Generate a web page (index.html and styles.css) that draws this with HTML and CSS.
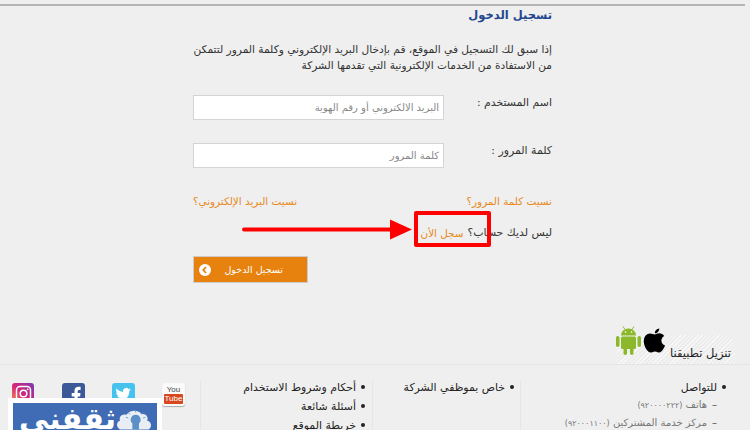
FILE: index.html
```html
<!DOCTYPE html>
<html lang="ar" dir="rtl">
<head>
<meta charset="utf-8">
<title>تسجيل الدخول</title>
<link rel="stylesheet" href="styles.css">
</head>
<body>
<main class="main">
  <div class="topline"></div>
  <section class="panel">
    <h1 class="title">تسجيل الدخول</h1>
    <p class="intro">إذا سبق لك التسجيل في الموقع، قم بإدخال البريد الإلكتروني وكلمة المرور لتتمكن<br>من الاستفادة من الخدمات الإلكترونية التي تقدمها الشركة</p>
    <div class="field field-user">
      <label class="label">اسم المستخدم :</label>
      <div class="input">البريد الالكتروني أو رقم الهوية</div>
    </div>
    <div class="field field-pass">
      <label class="label">كلمة المرور :</label>
      <div class="input">كلمة المرور</div>
    </div>
    <div class="forgot">
      <a class="link">نسيت كلمة المرور؟</a>
      <a class="link">نسيت البريد الإلكتروني؟</a>
    </div>
    <div class="signup">
      <span>ليس لديك حساب؟</span>
      <a class="link signup-link">سجل الأن</a>
      <span class="redbox"></span>
      <svg class="arrow" width="175" height="30" viewBox="0 0 175 30"><path d="M2 14.500H150" stroke="#f00" stroke-width="4" stroke-linecap="round"/><path d="M148 4.500L170 14.500L148 24.500Z" fill="#f00"/></svg>
    </div>
    <div class="btn">
      <span>تسجيل الدخول</span>
      <svg class="btn-ico" width="12" height="12" viewBox="0 0 12 12"><circle cx="6" cy="6" r="6" fill="#fff"/><path d="M7 3L4.300 6L7 9" fill="none" stroke="#e8820f" stroke-width="1.800"/></svg>
    </div>
  </section>
  <div class="apps">
    <div class="apps-tab">
      <span class="apps-text">تنزيل تطبيقنا</span>
      <svg class="apple" width="23" height="27" viewBox="0 0 24 27"><path d="M17 1c.2 2.500-2 5-4.600 5C12.100 3.500 14.500 1.200 17 1zM12.300 7.200c1.200 0 2.600-1.200 4.800-1.200 1.800 0 3.800 1 5 2.800-4.300 2.400-3.600 8.400.9 10-1.300 3.300-3.700 7.200-6 7.200-1.800 0-2.400-1.100-4.500-1.100s-2.800 1.100-4.500 1.100C4.800 26 .8 19.500.8 14.300.8 9.300 4 6.200 7.300 6.200c2.100 0 3.800 1 5 1z" fill="#000"/></svg>
      <svg class="android" width="25" height="29" viewBox="0 0 25 29"><g fill="#8cb92b"><path d="M5 9.500a7.500 7 0 0 1 15 0z"/><rect x="5" y="10.500" width="15" height="12.500" rx="1.500"/><rect x="0" y="10" width="3.500" height="11" rx="1.700"/><rect x="21.500" y="10" width="3.500" height="11" rx="1.700"/><rect x="7.500" y="20" width="3.500" height="9" rx="1.700"/><rect x="14" y="20" width="3.500" height="9" rx="1.700"/><path d="M7 0.500L9 3.500M18 0.500L16 3.500" stroke="#8cb92b"/></g><circle cx="9.500" cy="6" r=".8" fill="#fff"/><circle cx="15.500" cy="6" r=".8" fill="#fff"/></svg>
    </div>
  </div>
</main>
<footer class="footer">
  <div class="col col-contact">
    <ul class="list">
      <li>للتواصل
        <ul class="sub">
          <li>هاتف <span class="num">(٩٢٠٠٠٠٢٢٢)</span></li>
          <li>مركز خدمة المشتركين <span class="num">(٩٢٠٠٠١١٠٠)</span></li>
        </ul>
      </li>
    </ul>
  </div>
  <div class="col col-staff">
    <ul class="list"><li>خاص بموظفي الشركة</li></ul>
  </div>
  <div class="col col-links">
    <ul class="list">
      <li>أحكام وشروط الاستخدام</li>
      <li>أسئلة شائعة</li>
      <li>خريطة الموقع</li>
    </ul>
  </div>
  <div class="col col-social">
    <span class="social yt"><span class="yt-you">You</span><span class="yt-tube">Tube</span></span>
    <span class="social tw"><svg width="23" height="23" viewBox="0 0 23 23"><path d="M19 6.500c-.6.300-1.200.5-1.900.5.700-.4 1.200-1 1.400-1.800-.6.400-1.300.6-2 .8a3.200 3.200 0 0 0-5.500 2.900C8.300 8.800 6 7.600 4.500 5.600c-.9 1.500-.4 3.400 1 4.300-.5 0-1-.2-1.400-.4 0 1.600 1.100 2.900 2.600 3.200-.5.100-1 .1-1.500 0 .4 1.300 1.600 2.200 3 2.200-1.400 1.100-3.100 1.600-4.800 1.400 4.500 2.800 13.800 1.500 14-8.500.6-.4 1.100-.9 1.600-1.300z" fill="#fff"/></svg></span>
    <span class="social fb"><svg width="23" height="23" viewBox="0 0 23 23"><path d="M12.500 23v-9.500h-2.800V10h2.800V7.800c0-2.700 1.700-4.100 4-4.100h2.100v3.300h-1.500c-1.100 0-1.400.6-1.400 1.400V10h2.800l-.4 3.500h-2.400V23z" fill="#fff"/></svg></span>
    <span class="social ig"><svg width="21" height="21" viewBox="0 0 21 21"><rect x="3.500" y="3.500" width="14" height="14" rx="3.500" fill="none" stroke="#fff" stroke-width="1.500"/><circle cx="10.500" cy="10.500" r="3.300" fill="none" stroke="#fff" stroke-width="1.500"/><circle cx="14.700" cy="6.300" r=".9" fill="#fff"/></svg></span>
    <div class="logo">
      <div class="logo-inner">
        <svg class="logo-mark" width="50" height="27" viewBox="0 0 50 27"><path d="M5 27c-5-3-5-9 0-11-2-5 3-9 8-7 3-6 14-7 18-1 6-1 9 4 7 8 6 2 6 8 2 11z" fill="#e9eef4"/><path d="M24 9a6 6 0 0 0-4 10.500V27h8v-7.500A6 6 0 0 0 24 9z" fill="#5b8fc7"/><path d="M24 3v3M15 6l2 2.500M33 6l-2 2.500M12 12l3 1M36 12l-3 1" stroke="#5b8fc7" stroke-width="1"/></svg>
        <span class="logo-text">ثقفني</span>
      </div>
    </div>
  </div>
</footer>
</body>
</html>
```
FILE: styles.css
```css
* { box-sizing: border-box; }
html, body { margin: 0; padding: 0; }
body {
  width: 750px;
  height: 430px;
  overflow: hidden;
  background: #efefef;
  font-family: "DejaVu Sans", "Noto Sans", "Liberation Sans", sans-serif;
  color: #333;
}
.main { height: 364px; padding-top: 4px; position: relative; }
.topline { height: 2px; margin-right: 5px; background: #b5b5b5; }
.panel { padding: 0 198px 0 193px; position: relative; }
.title { margin: 0; font-size: 11.500px; line-height: 18px; font-weight: 700; color: #24488f; }
.intro { margin: 17px 0 0; font-size: 10.600px; line-height: 16px; color: #333; white-space: nowrap; }
.field { display: flex; align-items: flex-start; justify-content: space-between; }
.field-user { margin-top: 22px; }
.field-pass { margin-top: 23px; }
.label { font-size: 10.900px; line-height: 16px; color: #333; }
.input {
  width: 251px;
  height: 25px;
  background: #fff;
  border: 1px solid #d4d4d4;
  font-size: 10px;
  line-height: 23px;
  padding: 0 4px;
  color: #888;
}
.forgot { margin-top: 25px; display: flex; justify-content: space-between; }
.link { font-size: 10.400px; line-height: 16px; color: #e8891c; }
.signup { margin-top: 16px; display: flex; gap: 4px; font-size: 10.900px; line-height: 16px; position: relative; color: #333; }
.redbox { position: absolute; right: 61px; top: -14px; width: 77px; height: 36px; border: 4px solid #f00; border-radius: 2px; }
.arrow { position: absolute; right: 135px; top: -10px; }
.btn {
  margin-top: 15px;
  margin-right: auto;
  width: 115px;
  height: 27px;
  background: #e8820f;
  border: 1px solid #ccc;
  color: #fff;
  display: flex;
  align-items: center;
  justify-content: space-between;
  padding: 0 24px 0 5px;
  font-size: 9.500px;
  font-weight: 400;
  white-space: nowrap;
}
.apps { position: absolute; right: 15px; bottom: 0; }
.apps-tab {
  width: 118px;
  height: 29px;
  background: repeating-linear-gradient(135deg, #f8f8f8 0 1px, #ededed 1px 3px);
  border-radius: 10px 10px 0 0;
  position: relative;
}
.apps-text { position: absolute; right: 4px; bottom: 3px; font-size: 11.500px; line-height: 16px; color: #222; white-space: nowrap; }
.apple { position: absolute; left: 26px; bottom: 10px; }
.android { position: absolute; left: -1px; bottom: 9px; }
.footer { height: 66px; border-top: 1px solid #e4e4e4; display: flex; padding-top: 15px; font-size: 10.900px; color: #333; }
.col { height: 70px; flex: none; }
.col-contact { width: 230px; border-left: 1px solid #e6e6e6; }
.col-staff { width: 148px; border-left: 1px solid #e6e6e6; }
.col-links { width: 172px; border-left: 1px solid #e6e6e6; }
.col-social { width: 200px; display: flex; position: relative; }
.list { margin: 0; padding: 0 7px 0 0; list-style: none; }
.list > li { line-height: 16px; margin-bottom: 3px; color: #222; white-space: nowrap; }
.list > li::before { content: ""; display: inline-block; width: 4px; height: 4px; border-radius: 50%; background: #222; margin-left: 5px; vertical-align: 2px; }
.col-contact .list { padding-right: 24px; }
.col-staff .list { padding-right: 6px; }
.sub { margin: 0; padding: 0 9px 0 0; list-style: none; color: #777; font-size: 10px; }
.sub li { line-height: 17px; white-space: nowrap; }
.sub li::before { content: "–"; margin-left: 5px; color: #555; }
.num { font-size: 8px; }
.social { width: 23px; height: 23px; border-radius: 3px; margin-top: 3px; display: block; flex: none; }
.yt { margin-right: 15px; background: #fafafa; box-shadow: 0 1px 1px #aaa; display: flex; flex-direction: column; align-items: center; font-family: "Liberation Sans", sans-serif; font-size: 8px; line-height: 9px; color: #444; }
.yt-you { margin-top: 2px; }
.yt-tube { background: #d8481e; color: #fff; padding: 0 1px; border-radius: 1px; height: 10px; }
.tw { margin-right: 27px; background: #46c2ee; }
.fb { margin-right: 27px; background: #3b5998; }
.ig { width: 22px; margin-right: 28px; background: linear-gradient(45deg, #f9a13b, #d6247a 50%, #7a3bb5); }
.logo { position: absolute; left: 8px; top: 18px; width: 154px; height: 40px; background: #fff; padding: 5px 5px 0; }
.logo-inner { height: 35px; background: #3f6cb5; display: flex; justify-content: space-between; align-items: flex-start; color: #fff; overflow: hidden; }
.logo-text { font-size: 30px; line-height: 32px; font-weight: 700; padding-left: 6px; }
.logo-mark { margin: 2px 0 0; }
```
